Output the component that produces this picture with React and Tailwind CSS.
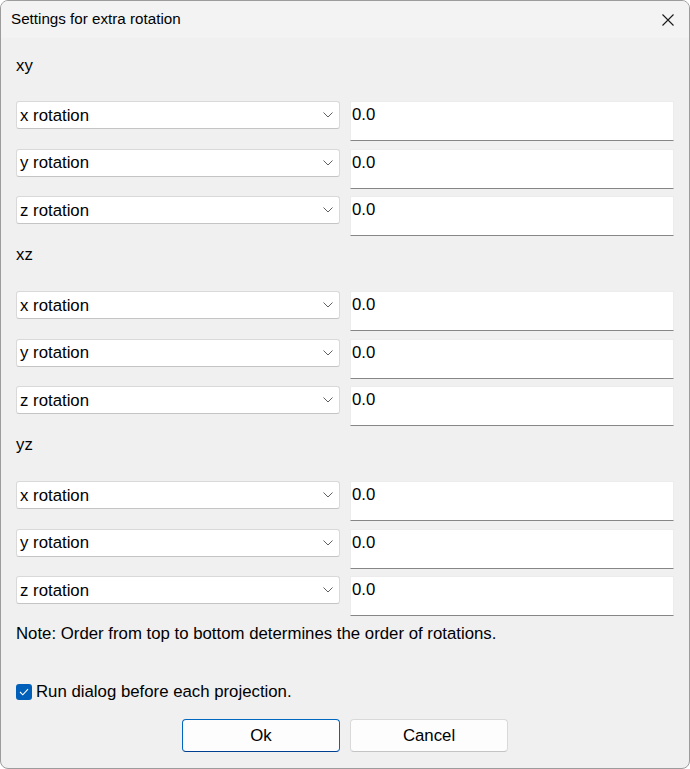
import React from "react";

const font = { fontFamily: '"Liberation Sans", Arial, sans-serif' };

function Chevron() {
  return (
    <svg width="10" height="6" viewBox="0 0 10 6" className="shrink-0">
      <path d="M0.5 0.5 L5 5 L9.5 0.5" fill="none" stroke="#606060" strokeWidth="1" />
    </svg>
  );
}

function Row({ axis }) {
  return (
    <div className="flex gap-[10px] h-[40px]">
      <div className="w-[324px] h-[28px] bg-white border border-[#d9d9d9] border-b-[#c4c4c4] rounded-[3px] flex items-center justify-between pl-[3px] pr-[6px] text-[16.8px] leading-[20px] text-black">
        <span className="pt-[1px]">{axis} rotation</span>
        <Chevron />
      </div>
      <div className="w-[324px] h-[40px] bg-white border border-[#ececec] border-b-[#868686] pl-[1px] pt-[3px] text-[16.8px] leading-[20px] text-black">
        0.0
      </div>
    </div>
  );
}

function Group({ label, first }) {
  return (
    <div className="flex flex-col">
      <div className={first ? "pt-[18px]" : "pt-[9px]"}>
        <div className="h-[20px] leading-[20px] text-[16.8px] text-black">{label}</div>
      </div>
      <div className={first ? "h-[25px]" : "h-[26px]"} />
      <div className="flex flex-col gap-[7.5px]">
        <Row axis="x" />
        <Row axis="y" />
        <Row axis="z" />
      </div>
    </div>
  );
}

export default function App() {
  return (
    <div className="w-[690px] h-[769px] bg-white" style={font}>
      <div className="w-full h-full border border-[#9c9c9c] rounded-[8px] overflow-hidden bg-[#f0f0f0] flex flex-col">
        <div className="h-[37px] bg-[#f3f3f3] flex items-center justify-between pl-[10px] pr-[15px] shrink-0">
          <span className="text-[15.2px] text-black">Settings for extra rotation</span>
          <svg width="12" height="12" viewBox="0 0 12 12">
            <path d="M0.5 0.5 L11.5 11.5 M11.5 0.5 L0.5 11.5" stroke="#1a1a1a" strokeWidth="1.1" fill="none" />
          </svg>
        </div>
        <div className="flex flex-col px-[15px]">
          <Group label="xy" first />
          <Group label="xz" />
          <Group label="yz" />
          <div className="pt-[8px] h-[28px] leading-[20px] text-[16.8px] text-black">
            Note: Order from top to bottom determines the order of rotations.
          </div>
          <div className="h-[38px]" />
          <div className="flex items-center gap-[4px] h-[20px]">
            <div className="w-[16px] h-[16px] rounded-[3px] bg-[#005fb8] flex items-center justify-center">
              <svg width="10" height="8" viewBox="0 0 10 8">
                <path d="M1 4 L3.8 6.8 L9 1.2" fill="none" stroke="white" strokeWidth="1.1" />
              </svg>
            </div>
            <span className="text-[16.8px] leading-[20px] text-black">Run dialog before each projection.</span>
          </div>
          <div className="flex gap-[10px] justify-center mt-[17px]">
            <button className="w-[158px] h-[33px] bg-[#fdfdfd] border border-[#0067c0] border-b-[#003e92] rounded-[4px] text-[16.8px] text-black">
              Ok
            </button>
            <button className="w-[158px] h-[33px] bg-[#fdfdfd] border border-[#d9d9d9] border-b-[#c4c4c4] rounded-[4px] text-[16.8px] text-black">
              Cancel
            </button>
          </div>
        </div>
      </div>
    </div>
  );
}
